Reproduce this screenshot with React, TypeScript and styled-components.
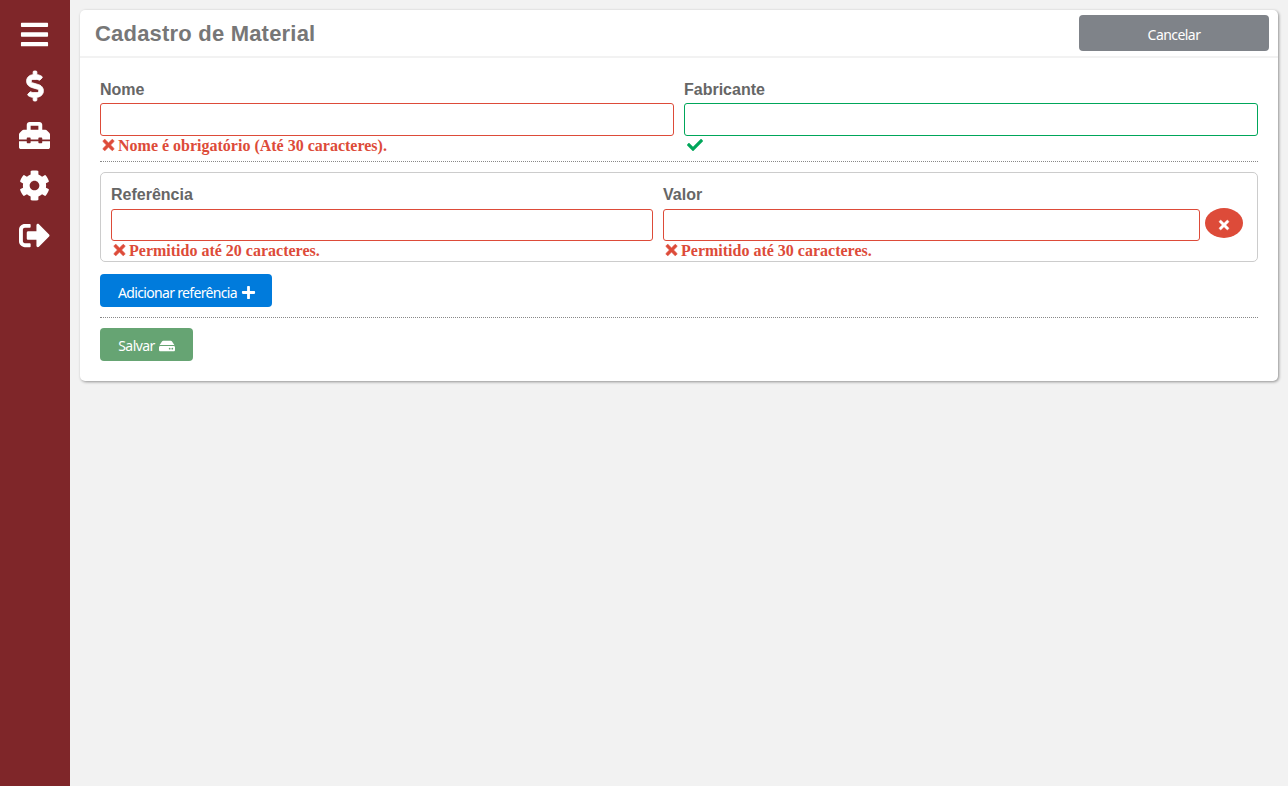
import React from 'react';
import styled, { createGlobalStyle } from 'styled-components';
import {
  FaBars,
  FaCheck,
  FaCog,
  FaHdd,
  FaPlus,
  FaSignOutAlt,
  FaTimes,
  FaToolbox,
} from 'react-icons/fa';

const RED = '#dd4b39';
const GREEN = '#00a65a';

const GlobalStyle = createGlobalStyle`
  * { box-sizing: border-box; }
  body {
    margin: 0;
    background: #f2f2f2;
    font-family: 'Liberation Sans', Arial, sans-serif;
  }
`;

const Page = styled.div`
  display: flex;
  min-height: 100vh;
`;

const Sidebar = styled.nav`
  display: flex;
  flex-direction: column;
  align-items: center;
  flex: 0 0 70px;
  padding-top: 10px;
  background: #7f2629;
`;

const NavItem = styled.a`
  display: flex;
  align-items: center;
  justify-content: center;
  width: 70px;
  height: 50px;
  padding: 0 1px 1px 0;
  color: #fff;
  font-size: 31px;

  &:first-child { margin-bottom: 1px; }
`;

const Main = styled.main`
  flex: 1;
  padding: 10px;
`;

const Card = styled.section`
  height: 371px;
  border-radius: 5px;
  background: #fff;
  box-shadow: 1px 1px 3px rgba(0, 0, 0, 0.4);
`;

const CardHeader = styled.header`
  display: flex;
  align-items: flex-start;
  justify-content: space-between;
  height: 48px;
  padding: 5px 9px 0 15px;
  border-bottom: 2px solid #f2f2f2;
`;

const Title = styled.h1`
  margin: 6px 0 0;
  color: #777;
  font-size: 22px;
  line-height: 26px;
  letter-spacing: 0.2px;
`;

const CardBody = styled.form`
  padding: 20px;
`;

const Row = styled.div`
  display: flex;
  gap: 10px;
`;

const Field = styled.div<{ $width: number }>`
  flex: 0 0 ${(p) => p.$width}px;
`;

const Label = styled.label<{ $height?: number }>`
  display: block;
  height: ${(p) => p.$height ?? 25}px;
  padding-top: 3px;
  color: #666;
  font-size: 16px;
  font-weight: bold;
  line-height: 18px;
`;

const Input = styled.input<{ $valid?: boolean; $height?: number }>`
  display: block;
  width: 100%;
  height: ${(p) => p.$height ?? 33}px;
  border: 1px solid ${(p) => (p.$valid ? GREEN : RED)};
  border-radius: 3px;
  background: #fff;
  outline: none;
`;

const Hint = styled.div<{ $valid?: boolean }>`
  display: flex;
  align-items: flex-start;
  gap: 3px;
  height: 19px;
  padding-left: ${(p) => (p.$valid ? 3 : 2)}px;
  color: ${(p) => (p.$valid ? GREEN : RED)};
  font-family: 'Liberation Serif', 'Times New Roman', serif;
  font-size: 16px;
  font-weight: bold;
  line-height: 20px;
  white-space: nowrap;

  svg {
    width: ${(p) => (p.$valid ? 16 : 13)}px;
    height: 16px;
    margin-top: 1px;
    stroke: currentColor;
    stroke-width: ${(p) => (p.$valid ? 0 : 20)}px;
    overflow: visible;
  }
`;

const Divider = styled.hr`
  margin: 0;
  border: 0;
  border-top: 1px dotted #888;
`;

const Group = styled.fieldset`
  display: flex;
  height: 90px;
  min-width: 0;
  margin: 10px 0 12px;
  padding: 10px;
  border: 1px solid #ccc;
  border-radius: 5px;
`;

const RemoveButton = styled.button`
  display: flex;
  align-items: center;
  justify-content: center;
  width: 38px;
  height: 30px;
  margin: 25px 0 0 5px;
  padding: 4px 0 0;
  border: 0;
  border-radius: 50%;
  background: ${RED};
  color: #fff;
  font-size: 14px;

  svg {
    stroke: currentColor;
    stroke-width: 16px;
    overflow: visible;
  }
`;

const Button = styled.button<{
  $color: string;
  $width: number;
  $height?: number;
  $spacing?: number;
  $shift?: boolean;
}>`
  display: flex;
  align-items: center;
  justify-content: center;
  gap: 4px;
  width: ${(p) => p.$width}px;
  height: ${(p) => p.$height ?? 33}px;
  padding: ${(p) => (p.$shift ? '4px 0 0 2px' : '2px 0 0')};
  border: 0;
  border-radius: 4px;
  background: ${(p) => p.$color};
  color: #fff;
  font-family: 'Noto Sans', Tahoma, sans-serif;
  font-size: 14px;
  letter-spacing: ${(p) => p.$spacing ?? -0.55}px;
  white-space: nowrap;

  svg {
    font-size: ${(p) => (p.$shift ? 15 : 16)}px;
    margin-top: ${(p) => (p.$shift ? 0 : 1)}px;
  }
`;

const FieldsRow = styled(Row)`
  padding-bottom: 6px;
`;

const Actions = styled.div<{ $top?: number }>`
  padding: ${(p) => p.$top ?? 0}px 0 10px;
`;

const DollarIcon = () => (
  <svg
    viewBox="0 0 288 512"
    width="30"
    height="30"
    fill="currentColor"
    stroke="currentColor"
    strokeWidth="14"
    overflow="visible"
  >
    <path d="M209.2 233.4l-108-31.6C88.7 198.2 80 186.5 80 173.5c0-16.3 13.2-29.5 29.5-29.5h66.3c12.2 0 24.2 3.7 34.2 10.5 6.1 4.1 14.3 3.1 19.5-2l34.8-34c7.1-6.9 6.1-18.4-1.8-24.5C238 74.8 207.4 64.1 176 64V16c0-8.8-7.2-16-16-16h-32c-8.8 0-16 7.2-16 16v48h-2.5C45.8 64-5.4 118.7.5 183.6c4.2 46.1 39.4 83.6 83.8 96.6l102.5 30c12.5 3.7 21.2 15.3 21.2 28.3 0 16.3-13.2 29.5-29.5 29.5h-66.3C100 368 88 364.3 78 357.5c-6.1-4.1-14.3-3.1-19.5 2l-34.8 34c-7.1 6.9-6.1 18.4 1.8 24.5 24.5 19.2 55.1 29.9 86.5 30v48c0 8.8 7.2 16 16 16h32c8.8 0 16-7.2 16-16v-48.2c46.6-.9 90.3-28.6 105.7-72.7 21.5-61.6-14.6-124.8-72.5-141.7z" />
  </svg>
);

const navIcons = [FaBars, DollarIcon, FaToolbox, FaCog, FaSignOutAlt];

const ErrorHint = ({ children }: { children: React.ReactNode }) => (
  <Hint>
    <FaTimes />
    <span>{children}</span>
  </Hint>
);

export default function App() {
  return (
    <Page>
      <GlobalStyle />
      <Sidebar>
        {navIcons.map((Icon, i) => (
          <NavItem key={i}>
            <Icon />
          </NavItem>
        ))}
      </Sidebar>
      <Main>
        <Card>
          <CardHeader>
            <Title>Cadastro de Material</Title>
            <Button type="button" $color="#7f8389" $width={190} $height={36}>
              Cancelar
            </Button>
          </CardHeader>
          <CardBody>
            <FieldsRow>
              <Field $width={574}>
                <Label>Nome</Label>
                <Input />
                <ErrorHint>Nome é obrigatório (Até 30 caracteres).</ErrorHint>
              </Field>
              <Field $width={574}>
                <Label>Fabricante</Label>
                <Input $valid />
                <Hint $valid>
                  <FaCheck />
                </Hint>
              </Field>
            </FieldsRow>
            <Divider />
            <Group>
              <Row>
                <Field $width={542}>
                  <Label $height={26}>Referência</Label>
                  <Input $height={32} />
                  <ErrorHint>Permitido até 20 caracteres.</ErrorHint>
                </Field>
                <Field $width={537}>
                  <Label $height={26}>Valor</Label>
                  <Input $height={32} />
                  <ErrorHint>Permitido até 30 caracteres.</ErrorHint>
                </Field>
              </Row>
              <RemoveButton type="button">
                <FaTimes />
              </RemoveButton>
            </Group>
            <Actions>
              <Button type="button" $color="#007bdc" $width={172} $spacing={-0.67} $shift>
                Adicionar referência <FaPlus />
              </Button>
            </Actions>
            <Divider />
            <Actions $top={10}>
              <Button type="button" $color="#66a473" $width={93}>
                Salvar <FaHdd />
              </Button>
            </Actions>
          </CardBody>
        </Card>
      </Main>
    </Page>
  );
}
